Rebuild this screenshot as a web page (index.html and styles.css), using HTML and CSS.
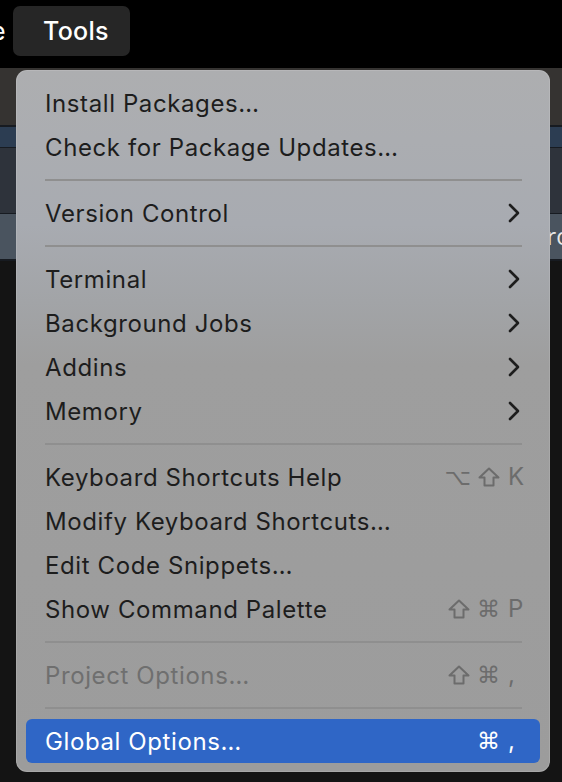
FILE: index.html
```html
<!DOCTYPE html>
<html>
<head>
<meta charset="utf-8">
<link rel="stylesheet" href="styles.css">
</head>
<body>
<div class="screen">
  <header class="menubar">
    <span class="prev-item">e</span>
    <span class="menu-title">Tools</span>
  </header>
  <div class="desktop">
    <div class="band band-top"></div>
    <div class="rule"></div>
    <div class="band band-tab"></div>
    <div class="rule thin"></div>
    <div class="band band-toolbar"></div>
    <div class="rule thin"></div>
    <div class="band band-header"><span class="band-text">Pro</span></div>
    <div class="rule"></div>
    <div class="band band-rest"></div>

    <nav class="menu">
      <div class="item"><span>Install Packages…</span></div>
      <div class="item"><span>Check for Package Updates…</span></div>
      <div class="sep"></div>
      <div class="item"><span>Version Control</span><svg class="chev" viewBox="0 0 12 20"><polyline points="2,2 10,10 2,18"/></svg></div>
      <div class="sep"></div>
      <div class="item"><span>Terminal</span><svg class="chev" viewBox="0 0 12 20"><polyline points="2,2 10,10 2,18"/></svg></div>
      <div class="item"><span>Background Jobs</span><svg class="chev" viewBox="0 0 12 20"><polyline points="2,2 10,10 2,18"/></svg></div>
      <div class="item"><span>Addins</span><svg class="chev" viewBox="0 0 12 20"><polyline points="2,2 10,10 2,18"/></svg></div>
      <div class="item"><span>Memory</span><svg class="chev" viewBox="0 0 12 20"><polyline points="2,2 10,10 2,18"/></svg></div>
      <div class="sep"></div>
      <div class="item"><span>Keyboard Shortcuts Help</span>
        <span class="key"><span class="glyph">⌥</span><svg class="shift" viewBox="0 0 22 20"><path d="M11 1.5 L20.5 10.5 H15.5 V18.5 H6.5 V10.5 H1.5 Z"/></svg><span class="k">K</span></span></div>
      <div class="item"><span>Modify Keyboard Shortcuts…</span></div>
      <div class="item"><span>Edit Code Snippets…</span></div>
      <div class="item"><span>Show Command Palette</span>
        <span class="key"><svg class="shift" viewBox="0 0 22 20"><path d="M11 1.5 L20.5 10.5 H15.5 V18.5 H6.5 V10.5 H1.5 Z"/></svg><span class="glyph">⌘</span><span class="k">P</span></span></div>
      <div class="sep"></div>
      <div class="item disabled"><span>Project Options…</span>
        <span class="key"><svg class="shift" viewBox="0 0 22 20"><path d="M11 1.5 L20.5 10.5 H15.5 V18.5 H6.5 V10.5 H1.5 Z"/></svg><span class="glyph">⌘</span><span class="k">,</span></span></div>
      <div class="sep"></div>
      <div class="item active"><span>Global Options…</span>
        <span class="key"><span class="glyph">⌘</span><span class="k">,</span></span></div>
    </nav>
  </div>
</div>
</body>
</html>
```

FILE: styles.css
```css
html, body {
  margin: 0;
  padding: 0;
  background: #131313;
}

.screen {
  width: 562px;
  height: 782px;
  overflow: hidden;
  display: flex;
  flex-direction: column;
  font-family: Inter, "Noto Sans", sans-serif;
}

.menubar {
  height: 68px;
  flex: none;
  background: #000;
  display: flex;
  align-items: flex-start;
  padding-top: 6px;
  box-sizing: border-box;
}

.prev-item {
  color: #fff;
  font-size: 25px;
  line-height: 50px;
  margin-left: -9px;
  width: 22px;
}

.menu-title {
  width: 117px;
  height: 50px;
  box-sizing: border-box;
  padding-left: 30px;
  background: #262626;
  border-radius: 7px;
  color: #fff;
  font-size: 25px;
  font-weight: 500;
  letter-spacing: 0.3px;
  line-height: 50px;
}

.desktop {
  position: relative;
  flex: 1;
  display: flex;
  flex-direction: column;
}

.band-top { height: 57px; background: #353331; }
.rule { height: 2px; background: #171b21; }
.rule.thin { height: 1px; }
.band-tab { height: 20px; background: #2c3d52; }
.band-toolbar { height: 65px; background: #2e333b; }
.band-header {
  height: 45px;
  background: #4a545f;
  white-space: nowrap;
  overflow: hidden;
}
.band-text {
  display: block;
  padding-left: 533px;
  color: #e8e8e8;
  font-size: 23px;
  line-height: 44px;
  font-family: "Open Sans", sans-serif;
}
.band-rest { flex: 1; background: #141414; }

.menu {
  position: absolute;
  left: 16px;
  top: 2px;
  width: 534px;
  height: 702px;
  box-sizing: border-box;
  padding: 11px 10px 10px;
  border-radius: 11px;
  background: linear-gradient(180deg, #adaeb0 0%, #abadb1 10%, #a8abb1 22%, #a2a4a7 33%, #9e9e9e 42%, #9c9c9c 100%);
  box-shadow: inset 0 0 0 1px rgba(255,255,255,0.12);
  display: flex;
  flex-direction: column;
}

.item {
  height: 44px;
  flex: none;
  display: flex;
  align-items: center;
  justify-content: space-between;
  padding: 0 14px 0 19px;
  font-size: 24px;
  letter-spacing: 0.6px;
  color: #1d1d1d;
  border-radius: 6px;
  white-space: nowrap;
}

.item.disabled { color: #6f6f6f; }

.item.active {
  background: #2f66c6;
  color: #fff;
}

.sep {
  height: 2px;
  flex: none;
  margin: 10px 18px 10px 19px;
  background: #8f8f8f;
}

.chev {
  width: 12px;
  height: 20px;
  margin-right: 6px;
  fill: none;
  stroke: #1d1d1d;
  stroke-width: 2.6;
  stroke-linecap: round;
  stroke-linejoin: round;
}

.key {
  display: flex;
  align-items: center;
  gap: 7px;
  color: #6c6c6c;
  letter-spacing: 0;
}

.glyph {
  font-family: "DejaVu Sans", sans-serif;
  font-size: 23px;
  line-height: 1;
}

.shift {
  width: 22px;
  height: 20px;
  fill: none;
  stroke: currentColor;
  stroke-width: 2;
  stroke-linejoin: round;
}

.k {
  width: 18px;
  font-size: 24px;
  line-height: 1;
  text-align: left;
  margin-left: 1px;
}

.item.active .key { color: #fff; }
```
